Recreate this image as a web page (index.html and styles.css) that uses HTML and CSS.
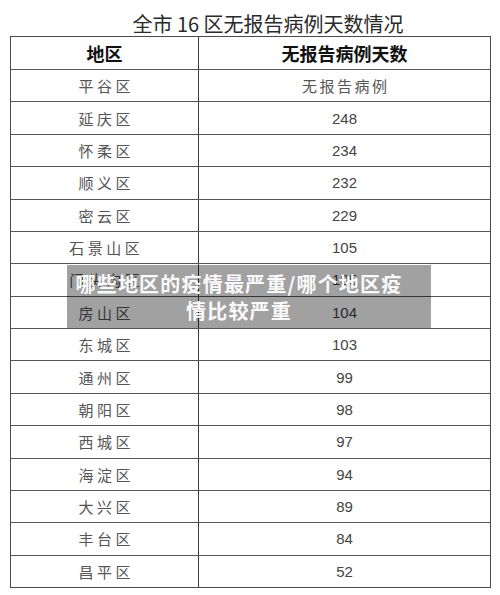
FILE: index.html
```html
<!DOCTYPE html>
<html lang="zh-CN">
<head>
<meta charset="utf-8">
<title>全市16区无报告病例天数情况</title>
<link rel="stylesheet" href="styles.css">
</head>
<body>
<div class="page">
  <div class="title">全市 16 区无报告病例天数情况</div>
  <div class="table">
    <div class="row head"><div class="c1">地区</div><div class="c2">无报告病例天数</div></div>
    <div class="row"><div class="c1 name">平谷区</div><div class="c2 name">无报告病例</div></div>
    <div class="row"><div class="c1 name">延庆区</div><div class="c2 num">248</div></div>
    <div class="row"><div class="c1 name">怀柔区</div><div class="c2 num">234</div></div>
    <div class="row"><div class="c1 name">顺义区</div><div class="c2 num">232</div></div>
    <div class="row"><div class="c1 name">密云区</div><div class="c2 num">229</div></div>
    <div class="row"><div class="c1 name">石景山区</div><div class="c2 num">105</div></div>
    <div class="row"><div class="c1 name">门头沟区</div><div class="c2 num">105</div></div>
    <div class="row"><div class="c1 name">房山区</div><div class="c2 num">104</div></div>
    <div class="row"><div class="c1 name">东城区</div><div class="c2 num">103</div></div>
    <div class="row"><div class="c1 name">通州区</div><div class="c2 num">99</div></div>
    <div class="row"><div class="c1 name">朝阳区</div><div class="c2 num">98</div></div>
    <div class="row"><div class="c1 name">西城区</div><div class="c2 num">97</div></div>
    <div class="row"><div class="c1 name">海淀区</div><div class="c2 num">94</div></div>
    <div class="row"><div class="c1 name">大兴区</div><div class="c2 num">89</div></div>
    <div class="row"><div class="c1 name">丰台区</div><div class="c2 num">84</div></div>
    <div class="row"><div class="c1 name">昌平区</div><div class="c2 num">52</div></div>
  </div>
  <div class="caption">哪些地区的疫情最严重/哪个地区疫情比较严重</div>
</div>
</body>
</html>
```
FILE: styles.css
```css
* { box-sizing: border-box; }
html, body { margin: 0; padding: 0; background: #fff; }
body {
  font-family: "Noto Sans CJK SC", "Liberation Sans", sans-serif;
  color: #333;
}
.page {
  position: relative;
  width: 500px;
  height: 595px;
  overflow: hidden;
}
.title {
  height: 36px;
  display: flex;
  align-items: flex-end;
  justify-content: center;
  padding: 0 0 2px 36px;
  font-size: 20px;
  line-height: 1;
  font-weight: 400;
  color: #2a2a2a;
}
.table {
  margin-left: 10px;
  width: 481px;
  border: 1.5px solid #4a4a4a;
  display: flex;
  flex-direction: column;
}
.row {
  display: flex;
  height: 32.375px;
  border-top: 1px solid #555;
}
.row.head {
  height: 32px;
  border-top: none;
}
.c1, .c2 {
  display: flex;
  align-items: center;
  justify-content: center;
}
.c1 {
  width: 188px;
  border-right: 1.5px solid #3a3a3a;
}
.c2 { flex: 1; }
.head .c1, .head .c2 {
  font-size: 18px;
  font-weight: 700;
  color: #111;
}
.name {
  font-size: 15px;
  font-weight: 400;
  letter-spacing: 3.5px;
  color: #555;
  padding-left: 3.5px;
}
.c2.name { letter-spacing: 2.5px; padding-left: 2.5px; }
.num {
  font-family: "Liberation Sans", sans-serif;
  font-size: 15px;
  color: #444;
}
.caption {
  position: absolute;
  left: 67px;
  top: 265px;
  width: 364px;
  height: 63px;
  padding: 0 24px 0 4px;
  background: rgba(0, 0, 0, 0.37);
  color: #fafafa;
  font-size: 20px;
  font-weight: 700;
  letter-spacing: 1.2px;
  line-height: 27px;
  text-align: center;
  display: flex;
  align-items: center;
  justify-content: center;
}
```
